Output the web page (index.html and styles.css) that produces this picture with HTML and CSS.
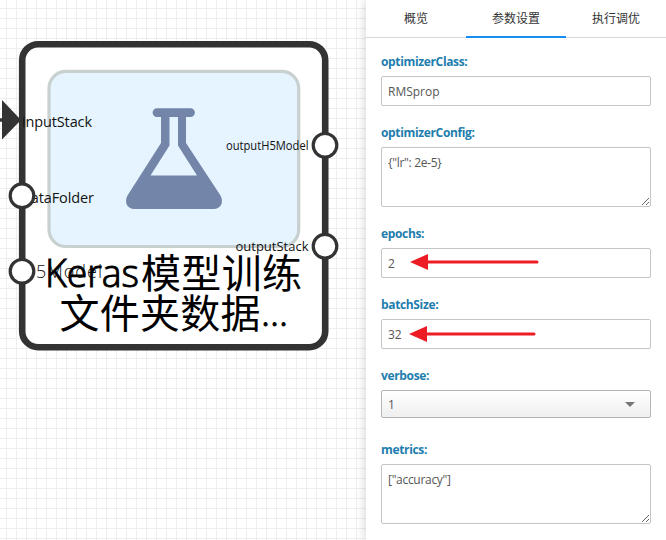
FILE: index.html
```
<!DOCTYPE html>
<html lang="zh-CN">
<head>
<meta charset="utf-8">
<title>参数设置</title>
<link rel="stylesheet" href="styles.css">
</head>
<body>
<main class="app">
  <section class="canvas">
    <svg class="diagram" viewBox="0 0 366 540" width="366" height="540">
      <rect class="node" x="22.2" y="44.2" width="303" height="303" rx="16"/>
      <rect class="node-body" x="49" y="71.3" width="249.7" height="175.2" rx="17"/>
      <g class="flask">
        <path fill-rule="evenodd" d="M157 108.2H190.500a4.400 4.400 0 0 1 0 8.800H186V143L220.500 195.500C224 202 221 209 213.500 209H134.500C127 209 124 202 127.500 195.500L161 143V117H157a4.400 4.400 0 0 1 0-8.800ZM169.500 117V145.500L150.500 175.500H197L178 145.500V117Z"/>
      </g>
      <path class="link" d="M0 120H6"/>
      <path class="link-head" d="M2 100L21 120L2 139.500Z"/>
      <g class="port-label">
        <text x="22" y="127" font-size="14.5" textLength="70">inputStack</text>
        <text x="22" y="203" font-size="14.5" textLength="72">dataFolder</text>
        <text class="light" x="22" y="277.500" font-size="18" textLength="80">H5Model</text>
        <text x="226" y="150" font-size="12" textLength="82.500" lengthAdjust="spacingAndGlyphs">outputH5Model</text>
        <text x="235.500" y="251" font-size="13" textLength="73">outputStack</text>
      </g>
      <g class="port">
        <circle cx="22" cy="195.700" r="11.800"/>
        <circle cx="22" cy="271.300" r="11.800"/>
        <circle cx="325" cy="145.300" r="11.800"/>
        <circle cx="325" cy="246.200" r="11.800"/>
      </g>
      <g class="node-title">
        <text class="latin" x="45" y="287" textLength="94" lengthAdjust="spacingAndGlyphs">Keras</text>
        <text x="141" y="287.500" textLength="161">模型训练</text>
        <text x="59.500" y="328" textLength="201">文件夹数据</text>
        <text class="latin" x="261" y="326" textLength="27">...</text>
      </g>
    </svg>
  </section>
  <aside class="panel">
    <nav class="tabs">
      <a class="tab">概览</a>
      <a class="tab tab-active">参数设置</a>
      <a class="tab">执行调优</a>
    </nav>
    <form class="form">
      <div class="field">
        <label class="label" for="oc">optimizerClass:</label>
        <input class="control" id="oc" value="RMSprop">
      </div>
      <div class="field">
        <label class="label" for="cfg">optimizerConfig:</label>
        <textarea class="control area" id="cfg">{"lr": 2e-5}</textarea>
      </div>
      <div class="field">
        <label class="label" for="ep">epochs:</label>
        <input class="control" id="ep" value="2">
        <svg class="arrow arrow-epochs" width="130" height="18"><path class="shaft" d="M16 8H127"/><path class="head" d="M0 8L18 0V16Z"/></svg>
      </div>
      <div class="field">
        <label class="label" for="bs">batchSize:</label>
        <input class="control" id="bs" value="32">
        <svg class="arrow arrow-batch" width="130" height="18"><path class="shaft" d="M16 8H125"/><path class="head" d="M0 8L18 0V16Z"/></svg>
      </div>
      <div class="field field-select">
        <span class="label">verbose:</span>
        <div class="control select">1<span class="caret"></span></div>
      </div>
      <div class="field">
        <label class="label" for="me">metrics:</label>
        <textarea class="control area" id="me">["accuracy"]</textarea>
      </div>
    </form>
  </aside>
</main>
</body>
</html>
```
FILE: styles.css
```
* { box-sizing: border-box; }
body {
  margin: 0;
  font-family: "Open Sans", "Noto Sans CJK SC", sans-serif;
  font-size: 12px;
  color: #565656;
}
.app { display: flex; width: 666px; height: 540px; overflow: hidden; }
.canvas {
  flex: 0 0 366px;
  background-color: #fff;
  background-image:
    linear-gradient(to right, #eee 1px, transparent 1px),
    linear-gradient(to bottom, #eee 1px, transparent 1px);
  background-size: 10px 10px;
  background-position: 6px 8px;
}
.diagram { display: block; }
.node { fill: #fff; stroke: #333; stroke-width: 6.6; }
.node-body { fill: #e5f4ff; stroke: #c8d1d0; stroke-width: 3.2; }
.flask { fill: #7385a9; }
.link { stroke: #333; stroke-width: 3.5; }
.link-head { fill: #333; }
.port circle { fill: #fff; stroke: #333; stroke-width: 3.2; }
.port-label { fill: #111; }
.light { font-weight: 300; }
.node-title { font-family: "Open Sans", "Noto Sans CJK SC", sans-serif; font-size: 40px; fill: #000; }
.latin { font-size: 38px; font-weight: 300; stroke: #000; stroke-width: 1; }
.panel {
  position: relative;
  flex: 0 0 300px;
  background: #fff;
  box-shadow: 0 0 10px rgba(0, 0, 0, .2);
}
.tabs { display: flex; height: 38px; border-bottom: 1px solid #d7d7d7; }
.tab { flex: 1; height: 38px; line-height: 38px; text-align: center; color: #333; }
.tab-active { border-bottom: 2px solid #178df0; }
.form { padding: 14px 15px 0; }
.field { position: relative; margin-bottom: 17px; }
.field-select { margin-bottom: 22px; }
.label { display: block; height: 20px; margin-bottom: 4px; line-height: 20px; font-weight: 700; letter-spacing: -.35px; color: #217dad; }
.control {
  display: block;
  width: 100%;
  height: 30px;
  padding: 0 6px;
  border: 1px solid #c5c5c5;
  border-radius: 2px;
  background: #fff;
  font: inherit;
  color: #565656;
  outline: 0;
}
.area { height: 60px; padding-top: 6px; line-height: 18px; letter-spacing: -.3px; resize: vertical; overflow: hidden; }
.select {
  display: flex;
  align-items: center;
  justify-content: space-between;
  height: 28px;
  padding-right: 15px;
  border-color: #b5b5b5;
  background: linear-gradient(#fff, #efefef);
}
.caret { border: 5px solid transparent; border-top-color: #777; border-bottom: 0; }
.arrow { position: absolute; overflow: visible; }
.arrow-epochs { left: 29px; top: 30px; }
.arrow-batch { left: 28px; top: 31px; }
.shaft { stroke: #ed1c24; stroke-width: 3; stroke-linecap: round; }
.head { fill: #ed1c24; }
```
